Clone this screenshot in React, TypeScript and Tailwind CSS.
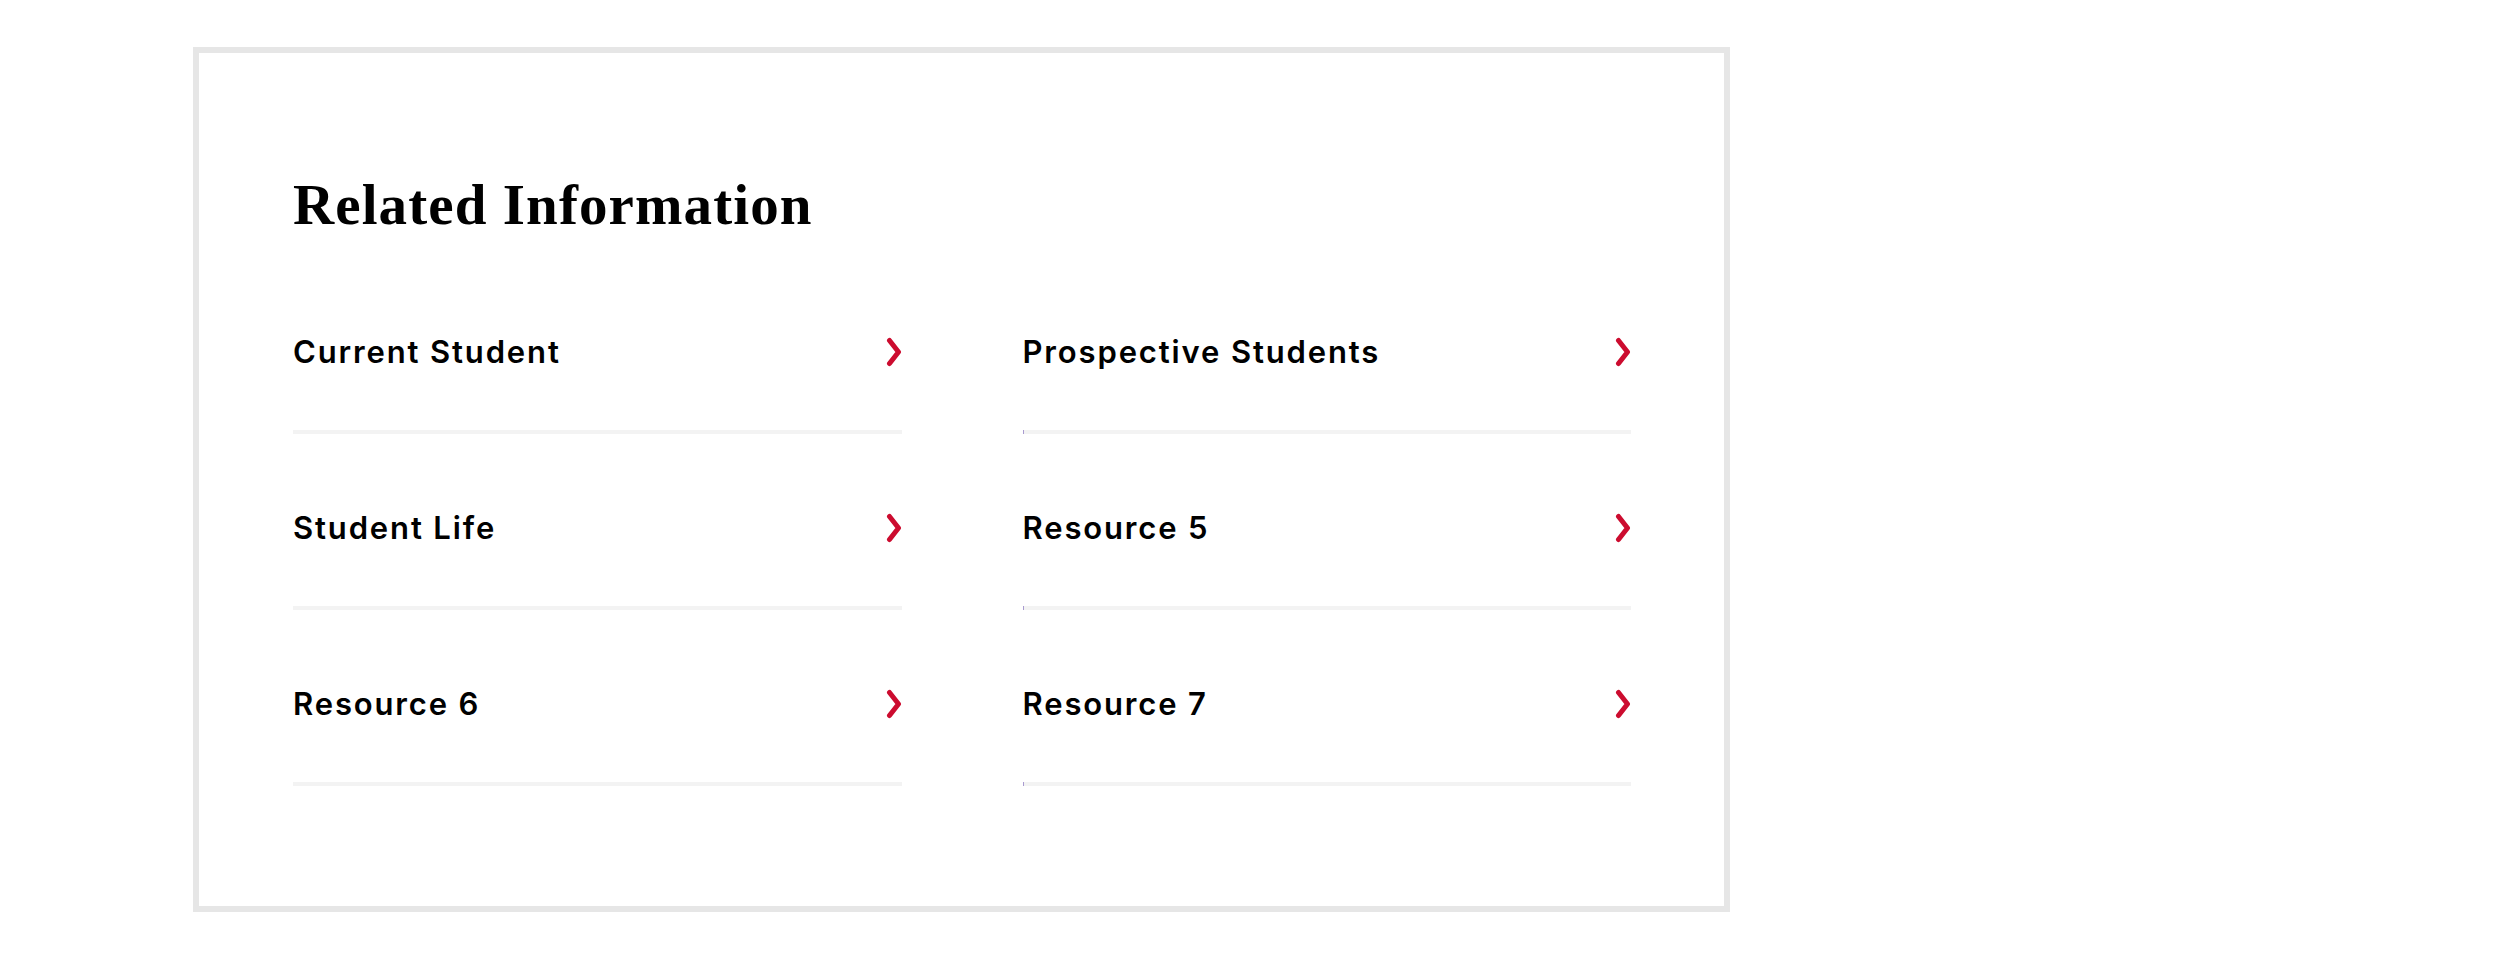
const links = [
  { label: 'Current Student', side: 'left' },
  { label: 'Prospective Students', side: 'right' },
  { label: 'Student Life', side: 'left' },
  { label: 'Resource 5', side: 'right' },
  { label: 'Resource 6', side: 'left' },
  { label: 'Resource 7', side: 'right' },
];

function Chevron() {
  return (
    <svg width="16" height="30" viewBox="0 0 16 30" fill="none" className="shrink-0">
      <path d="M3.5 3.5L12.5 15L3.5 26.5" stroke="#cc0c2f" strokeWidth="5" strokeLinecap="round" strokeLinejoin="round" />
    </svg>
  );
}

export default function App() {
  return (
    <div className="min-h-screen bg-white pl-[193px] pt-[47px]">
      {/* Related information card */}
      <section className="w-[1537px] h-[865px] border-[6px] border-[#e6e6e6] pt-[123px] pl-[94px] pr-[93px]">
        <h2
          className="text-[57px] leading-none font-bold text-black tracking-[1.1px] mb-[25px]"
          style={{ fontFamily: '"Liberation Serif", serif' }}
        >
          Related Information
        </h2>

        <ul className="grid grid-cols-2 gap-x-[121px]">
          {links.map((link) => (
            <li
              key={link.label}
              className={
                link.side === 'right'
                  ? "relative border-b-4 border-[#f3f3f3] after:content-[''] after:absolute after:left-0 after:bottom-[-4px] after:w-px after:h-1 after:bg-[#a99bd0]"
                  : 'relative border-b-4 border-[#f3f3f3]'
              }
            >
              <a
                href="#"
                className="flex items-center justify-between pt-[74px] pb-[58px] text-[31px] leading-[40px] font-semibold tracking-[0.06em] text-black"
                style={{ fontFamily: 'Inter, "Liberation Sans", sans-serif' }}
              >
                <span>{link.label}</span>
                <Chevron />
              </a>
            </li>
          ))}
        </ul>
      </section>
    </div>
  );
}
